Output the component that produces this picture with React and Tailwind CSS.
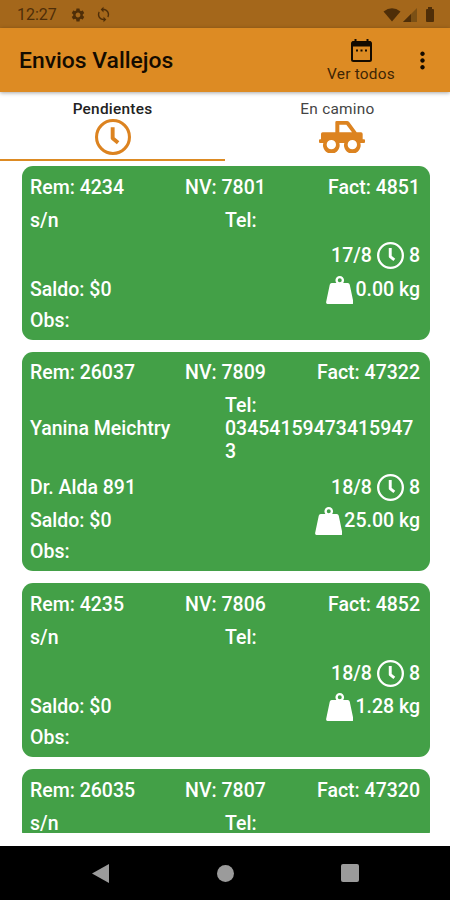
import React from "react";
import { MdSettings, MdSync, MdMoreVert } from "react-icons/md";

const shipments = [
  { rem: "4234", nv: "7801", fact: "4851", name: "s/n", tel: "", address: "", date: "17/8", weight: "0.00" },
  { rem: "26037", nv: "7809", fact: "47322", name: "Yanina Meichtry", tel: "034541594734159473", address: "Dr. Alda 891", date: "18/8", weight: "25.00" },
  { rem: "4235", nv: "7806", fact: "4852", name: "s/n", tel: "", address: "", date: "18/8", weight: "1.28" },
];

const nextShipment = { rem: "26035", nv: "7807", fact: "47320", name: "s/n", tel: "" };

function ClockIcon({ className }) {
  return (
    <svg viewBox="0 0 106 106" className={className} fill="none" stroke="currentColor">
      <circle cx="53" cy="53" r="48.500" strokeWidth="9" />
      <path d="M52 24V57L68 70" strokeWidth="11.500" strokeLinejoin="round" />
    </svg>
  );
}

function TruckIcon({ className }) {
  return (
    <svg viewBox="0 0 138 96" className={className} fill="currentColor">
      <path
        fillRule="evenodd"
        d="M53 0H84Q88 0 91 4L113 34H126Q131 34 131 39V55H135Q138 55 138 58V63Q138 66 135 66H124A25 25 0 1 1 76 66H61A25 25 0 1 1 13 66H3Q0 66 0 63V58Q0 55 3 55H6V39Q6 34 11 34H49V4Q49 0 53 0ZM61 11V34H99L82 11ZM37 57A14 14 0 1 0 37 85A14 14 0 1 0 37 57ZM100 57A14 14 0 1 0 100 85A14 14 0 1 0 100 57Z"
      />
    </svg>
  );
}

function WeightIcon({ className }) {
  return (
    <svg viewBox="0 0 82 84" className={className} fill="currentColor">
      <circle cx="41" cy="13" r="9.500" fill="none" stroke="currentColor" strokeWidth="7" />
      <path d="M17 21H65Q70 21 71 26L82 79Q82 84 78 84H4Q0 84 0 79L11 26Q12 21 17 21Z" />
    </svg>
  );
}

function StatusBar() {
  return (
    <div className="flex h-[28px] shrink-0 items-center bg-[#a4671b] pr-[16px] pl-[17px] text-[#4f2e08]">
      <span className="w-[53px] pt-[2px] text-[16px] leading-none">12:27</span>
      <MdSettings className="mt-[1px] size-[16px]" />
      <MdSync className="ml-[9px] size-[17px]" />
      <svg viewBox="0 0 18 14" className="mt-[1px] ml-auto h-[14px] w-[18px]" fill="currentColor">
        <path d="M0.5 3.5Q9-3 17.500 3.500L9 13.500Z" />
      </svg>
      <svg viewBox="0 0 14 14" className="mt-[1px] ml-[2px] size-[14px]">
        <path d="M14 0V14H0Z" fill="#7b5015" />
        <path d="M8 6V14H0Z" fill="currentColor" />
      </svg>
      <svg viewBox="0 0 8 15" className="ml-[9px] h-[15px] w-[8px]" fill="currentColor">
        <path d="M2 0H6V2H7Q8 2 8 3V14Q8 15 7 15H1Q0 15 0 14V3Q0 2 1 2H2Z" />
      </svg>
    </div>
  );
}

function CalendarIcon() {
  return (
    <svg viewBox="0 0 21 23" className="h-[23px] w-[21px]">
      <path d="M4.500 0V4M16.500 0V4" stroke="#140b00" strokeWidth="2" />
      <rect x="1" y="3" width="19" height="19" rx="1.500" fill="none" stroke="#140b00" strokeWidth="2" />
      <rect x="1" y="2.500" width="19" height="5" fill="#140b00" />
      <path d="M5 11.500H7M9.500 11.500H11.500M14 11.500H16" stroke="#140b00" strokeWidth="2" />
    </svg>
  );
}

function AppBar() {
  return (
    <header className="z-10 flex h-[64px] shrink-0 items-center bg-[#dd8b23] pl-[19px] text-[#140b00] shadow-[0_1px_4px_rgba(0,0,0,0.35)]">
      <h1 className="mt-[3px] text-[22.9px] leading-none font-medium">Envios Vallejos</h1>
      <div className="ml-auto flex w-[70px] flex-col items-center pt-[2px]">
        <CalendarIcon />
        <span className="mt-[3px] text-[15.4px] leading-[18px] tracking-[0.25px] whitespace-nowrap text-[#3d2504]">Ver todos</span>
      </div>
      <MdMoreVert className="mr-[14px] ml-[13px] size-[27px]" />
    </header>
  );
}

function Tabs() {
  return (
    <nav className="grid h-[69px] shrink-0 grid-cols-2 bg-white text-[15.4px] tracking-[0.25px]">
      <div className="flex flex-col items-center border-b-2 border-[#dd8b23] pt-[8px]">
        <span className="leading-[18px] font-medium text-[#222]">Pendientes</span>
        <ClockIcon className="mt-px size-[36px] text-[#dc8320]" />
      </div>
      <div className="flex flex-col items-center pt-[8px]">
        <span className="leading-[18px] text-[#444]">En camino</span>
        <TruckIcon className="mt-[3px] ml-[9px] h-[32px] w-[46px] text-[#dc8320]" />
      </div>
    </nav>
  );
}

function CardShell({ children }) {
  return (
    <article className="shrink-0 rounded-[11px] bg-[#43a047] pt-[4.7px] pr-[9.5px] pb-[2px] pl-[8.5px] text-[19.5px] leading-[23px] font-medium text-white">
      {children}
    </article>
  );
}

function CardHeading({ rem, nv, fact, name, tel }) {
  return (
    <>
      <div className="grid grid-cols-3 py-[5px]">
        <span className="whitespace-nowrap">Rem: {rem}</span>
        <span className="pl-[1px] text-center whitespace-nowrap">NV: {nv}</span>
        <span className="text-right whitespace-nowrap">Fact: {fact}</span>
      </div>
      <div className="grid grid-cols-2 items-center py-[5px]">
        <span>{name}</span>
        <span className="min-w-0 break-words">Tel: {tel}</span>
      </div>
    </>
  );
}

function ShipmentCard({ address, date, weight, ...heading }) {
  return (
    <CardShell>
      <CardHeading {...heading} />
      <div className="flex h-[38px] items-center justify-between">
        <span>{address}</span>
        <span className="flex items-center gap-[5px]">
          {date}
          <ClockIcon className="size-[27px]" />
          8
        </span>
      </div>
      <div className="flex h-[29px] items-center justify-between">
        <span>Saldo: $0</span>
        <span className="flex items-center gap-[2px]">
          <WeightIcon className="mt-[1px] h-[28px] w-[27.5px]" />
          {weight} kg
        </span>
      </div>
      <div className="flex h-[34px] items-center pb-[1px]">Obs:</div>
    </CardShell>
  );
}

function NavigationBar() {
  return (
    <footer className="flex h-[54px] shrink-0 items-center justify-between bg-black pr-[91px] pl-[92px] text-[#9b9b9b]">
      <svg viewBox="0 0 17 19" className="h-[19px] w-[17px]" fill="currentColor">
        <path d="M0 9.500L17 0V19Z" />
      </svg>
      <span className="size-[17px] rounded-full bg-[#9b9b9b]" />
      <span className="size-[18px] rounded-[2px] bg-[#9b9b9b]" />
    </footer>
  );
}

export default function App() {
  return (
    <div className="flex h-[900px] w-[450px] flex-col overflow-hidden bg-white font-['Roboto',sans-serif]">
      <StatusBar />
      <AppBar />
      <Tabs />
      <main className="mt-[5px] mr-[20.5px] mb-[13px] ml-[21.5px] flex min-h-0 flex-1 flex-col gap-[12px] overflow-hidden">
        {shipments.map((s) => (
          <ShipmentCard key={s.rem} {...s} />
        ))}
        <CardShell>
          <CardHeading {...nextShipment} />
        </CardShell>
      </main>
      <NavigationBar />
    </div>
  );
}
